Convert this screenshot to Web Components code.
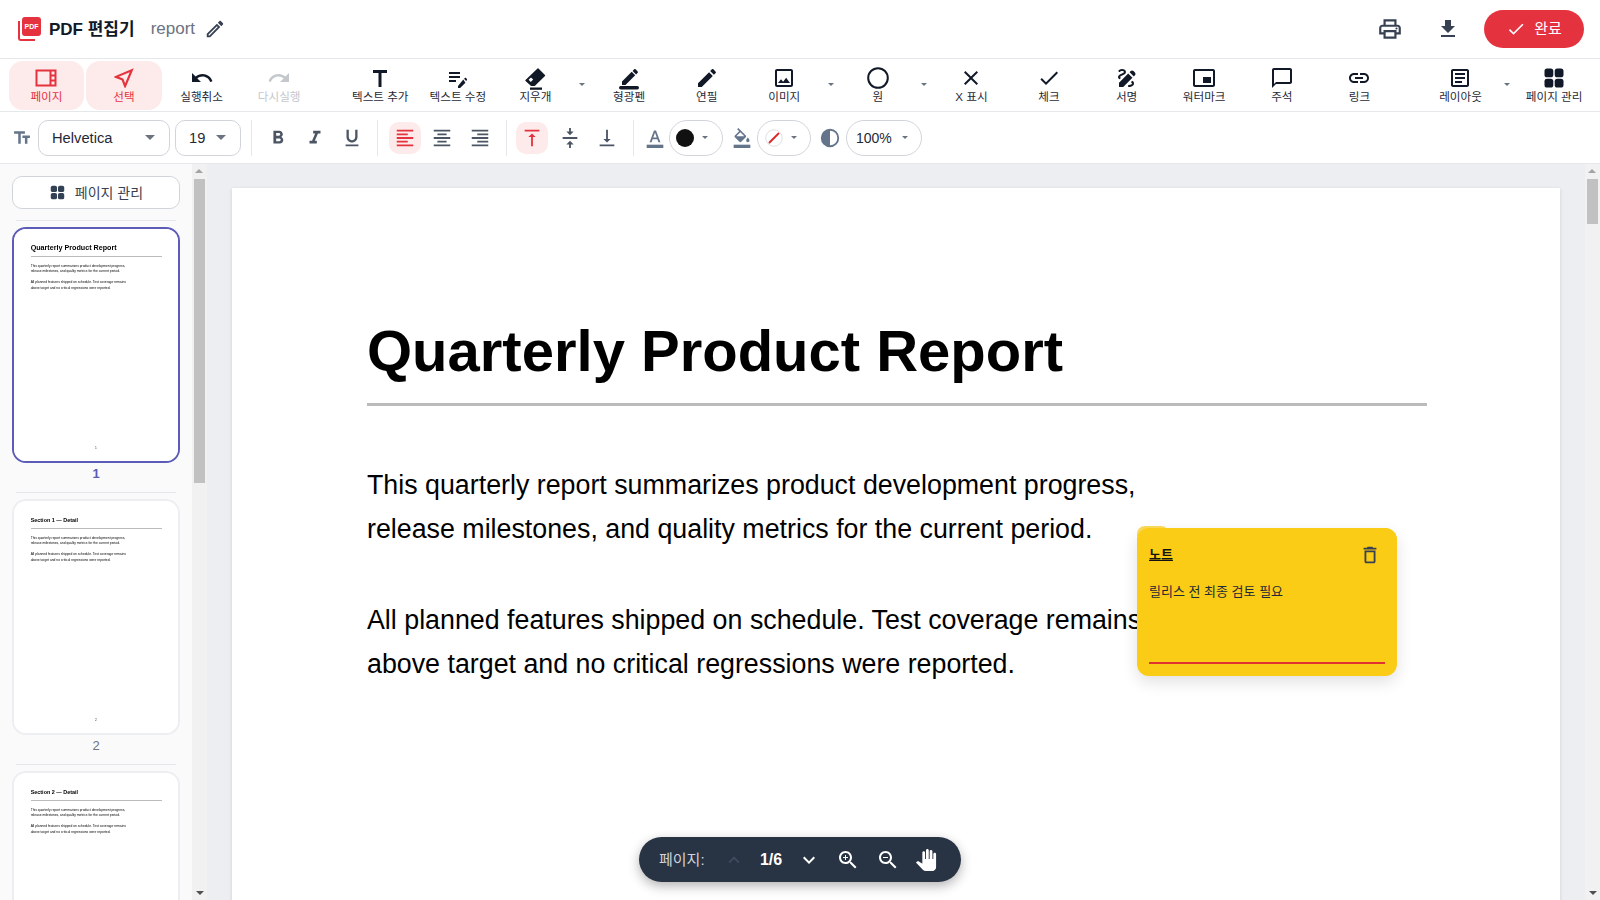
<!DOCTYPE html>
<html lang="ko">
<head>
<meta charset="utf-8">
<title>PDF 편집기</title>
<style>
    html, body { margin: 0; height: 100%; overflow: hidden; }
    body {
        font-family: "Liberation Sans", "Noto Sans CJK KR", sans-serif;
        color: #1f2937;
        background: #fff;
    }
    pdf-editor { height: 900px; }
</style>
</head>
<body>
<pdf-editor></pdf-editor>

<script>
/* Material style icon paths, all on a 24x24 box */
const ICONS = {
    page: '<path fill-rule="evenodd" d="M1.500 3.500h21v17h-21zM3.500 5.500v13h12v-13zM17.500 5.500v3h3v-3zM17.500 10.500v3h3v-3zM17.500 15.500v3h3v-3z"/>',
    select: '<path d="M17.270 6.730l-4.240 10.130-1.320-3.420-.32-.83-.82-.32-3.430-1.330 10.130-4.230M21 3L3 10.530v.98l6.840 2.650L12.480 21h.98L21 3z"/>',
    undo: '<path d="M12.500 8c-2.650 0-5.050.99-6.900 2.600L2 7v9h9l-3.620-3.620c1.390-1.160 3.160-1.880 5.120-1.880 3.540 0 6.550 2.310 7.600 5.500l2.370-.78C21.080 11.030 17.150 8 12.500 8z"/>',
    redo: '<path d="M18.400 10.600C16.550 8.990 14.150 8 11.500 8c-4.650 0-8.580 3.030-9.960 7.220L3.900 16c1.050-3.190 4.050-5.500 7.600-5.500 1.950 0 3.730.72 5.120 1.880L13 16h9V7l-3.600 3.600z"/>',
    title: '<path d="M5 4v3h5.500v14h3V7H19V4z"/>',
    editnote: '<path d="M3 10h11v2H3zm0-2h11V6H3zm0 8h7v-2H3zm15.010-3.130.71-.71c.39-.39 1.020-.39 1.410 0l.71.71c.39.39.39 1.020 0 1.410l-.71.71zm-.71.71L12 19.880V22h2.120l5.300-5.300z"/>',
    eraser: '<path stroke="currentColor" stroke-width="1.400" stroke-linejoin="round" d="M15 3 21.500 9.500 11.500 19.300H8.300L3 14.500z"/><path fill="#fff" d="M5.600 13.800 8 11.400 10.200 13.600 7.800 16z"/><rect x="7" y="21.500" width="12" height="2.300"/>',
    highlight: '<path d="M5 15.500V19h3.500L18.200 9.300l-3.500-3.500zM20.700 6.800c.4-.4.4-1 0-1.400l-2.100-2.100c-.4-.4-1-.4-1.400 0l-1.600 1.600 3.500 3.500z"/><rect x="2" y="20" width="20" height="3.400" rx="1.700"/>',
    pencil: '<path d="M3 17.250V21h3.750L17.810 9.940l-3.750-3.750L3 17.250zM20.710 7.040c.39-.39.39-1.020 0-1.410l-2.340-2.340c-.39-.39-1.020-.39-1.410 0l-1.830 1.830 3.750 3.750 1.830-1.830z"/>',
    pencilline: '<path d="M14.060 9.020l.92.92L5.920 19H5v-.92l9.060-9.060M17.660 3c-.25 0-.51.1-.7.29l-1.830 1.830 3.750 3.750 1.830-1.830c.39-.39.39-1.020 0-1.410l-2.340-2.340c-.2-.2-.45-.29-.71-.29zm-3.600 3.190L3 17.250V21h3.750L17.810 9.940l-3.750-3.750z"/>',
    image: '<path d="M19 5v14H5V5h14m0-2H5c-1.100 0-2 .9-2 2v14c0 1.100.9 2 2 2h14c1.100 0 2-.9 2-2V5c0-1.100-.9-2-2-2zm-4.860 8.860l-3 3.870L9 13.140 6 17h12l-3.860-5.140z"/>',
    circle: '<circle cx="12" cy="12" r="9.800" fill="none" stroke="currentColor" stroke-width="2"/>',
    cross: '<path d="M19 6.410 17.590 5 12 10.590 6.410 5 5 6.410 10.590 12 5 17.590 6.410 19 12 13.410 17.590 19 19 17.590 13.410 12z"/>',
    check: '<path d="M9 16.170 4.830 12l-1.420 1.410L9 19 21 7l-1.410-1.410z"/>',
    sign: '<path d="M18.850 10.390l1.060-1.060c.78-.78.78-2.050 0-2.830L18.500 5.090c-.78-.78-2.050-.78-2.830 0l-1.060 1.060 4.240 4.240zm-5.660-2.830L4 16.760V21h4.240l9.190-9.190-4.240-4.250zM19 17.500c0 2.190-2.540 3.500-5 3.500-.55 0-1-.45-1-1s.45-1 1-1c1.540 0 3-.73 3-1.500 0-.47-.48-.87-1.230-1.200l1.480-1.480c1.070.63 1.750 1.460 1.750 2.680zM4.580 13.350C3.610 12.790 3 12.060 3 11c0-1.800 1.890-2.630 3.560-3.360C7.590 7.180 9 6.560 9 6c0-.41-.78-1-2-1-1.260 0-1.800.61-1.830.64-.35.41-.98.46-1.400.12-.41-.34-.49-.95-.15-1.370C3.730 4.270 4.820 3 7 3s4 1.280 4 3c0 1.870-1.930 2.720-3.640 3.470C6.420 9.880 5 10.500 5 11c0 .31.43.6 1.070.86z"/>',
    watermark: '<path d="M19 11h-8v6h8v-6zm4 8V5c0-1.100-.9-2-2-2H3c-1.100 0-2 .9-2 2v14c0 1.100.9 2 2 2h18c1.100 0 2-.9 2-2zm-2 0H3V5h18v14z"/>',
    comment: '<path d="M20 2H4c-1.100 0-2 .9-2 2v18l4-4h14c1.100 0 2-.9 2-2V4c0-1.100-.9-2-2-2zm0 14H6l-2 2V4h16v12z"/>',
    link: '<path d="M3.900 12c0-1.710 1.390-3.100 3.100-3.100h4V7H7c-2.760 0-5 2.240-5 5s2.240 5 5 5h4v-1.900H7c-1.710 0-3.100-1.390-3.100-3.100zM8 13h8v-2H8v2zm9-6h-4v1.900h4c1.710 0 3.100 1.390 3.100 3.100s-1.390 3.100-3.100 3.100h-4V17h4c2.760 0 5-2.240 5-5s-2.240-5-5-5z"/>',
    layout: '<path d="M19 5v14H5V5h14m0-2H5c-1.100 0-2 .9-2 2v14c0 1.100.9 2 2 2h14c1.100 0 2-.9 2-2V5c0-1.100-.9-2-2-2z"/><path d="M14 17H7v-2h7v2zm3-4H7v-2h10v2zm0-4H7V7h10v2z"/>',
    grid: '<rect x="2.500" y="2.500" width="8.800" height="8.800" rx="2.600"/><rect x="12.700" y="2.500" width="8.800" height="8.800" rx="2.600"/><rect x="2.500" y="12.700" width="8.800" height="8.800" rx="2.600"/><rect x="12.700" y="12.700" width="8.800" height="8.800" rx="2.600"/>',
    print: '<path d="M19 8h-1V3H6v5H5c-1.660 0-3 1.340-3 3v6h4v4h12v-4h4v-6c0-1.660-1.340-3-3-3zM8 5h8v3H8V5zm8 14H8v-4h8v4zm2-4v-2H6v2H4v-4c0-.55.45-1 1-1h14c.55 0 1 .45 1 1v4h-2z"/><circle cx="18" cy="11.500" r="1"/>',
    download: '<path d="M5 20h14v-2H5v2zM19 9h-4V3H9v6H5l7 7 7-7z"/>',
    textsize: '<path d="M2.500 4v3h5v12h3V7h5V4h-13zm19 5h-9v3h3v7h3v-7h3V9z"/>',
    bold: '<path d="M15.600 10.790c.97-.67 1.650-1.770 1.650-2.790 0-2.260-1.750-4-4-4H7v14h7.040c2.090 0 3.710-1.700 3.710-3.790 0-1.520-.86-2.820-2.150-3.420zM10 6.500h3c.83 0 1.500.67 1.500 1.500s-.67 1.500-1.500 1.500h-3v-3zm3.500 9H10v-3h3.500c.83 0 1.500.67 1.500 1.500s-.67 1.500-1.500 1.500z"/>',
    italic: '<path d="M10 4v3h2.210l-3.420 8H6v3h8v-3h-2.210l3.420-8H18V4z"/>',
    underline: '<path d="M12 17c3.310 0 6-2.690 6-6V3h-2.500v8c0 1.930-1.570 3.500-3.500 3.500S8.500 12.930 8.500 11V3H6v8c0 3.310 2.690 6 6 6zm-7 2v2h14v-2H5z"/>',
    alignleft: '<path d="M15 15H3v2h12v-2zm0-8H3v2h12V7zM3 13h18v-2H3v2zm0 8h18v-2H3v2zM3 3v2h18V3H3z"/>',
    aligncenter: '<path d="M7 15v2h10v-2H7zm-4 6h18v-2H3v2zm0-8h18v-2H3v2zm4-6v2h10V7H7zM3 3v2h18V3H3z"/>',
    alignright: '<path d="M3 21h18v-2H3v2zm6-4h12v-2H9v2zm-6-4h18v-2H3v2zm6-4h12V7H9v2zM3 3v2h18V3H3z"/>',
    valigntop: '<path d="M8 11h3v10h2V11h3l-4-4-4 4zM4 3v2h16V3H4z"/>',
    valignmid: '<path d="M8 19h3v4h2v-4h3l-4-4-4 4zm8-14h-3V1h-2v4H8l4 4 4-4zM4 11v2h16v-2H4z"/>',
    valignbot: '<path d="M16 13h-3V3h-2v10H8l4 4 4-4zM4 19v2h16v-2H4z"/>',
    textcolor: '<path d="M2 20h20v4H2z"/><path d="M5.490 17h2.420l1.270-3.580h5.650L16.090 17h2.420L13.250 3h-2.500zm4.420-5.610 2.030-5.790h.12l2.030 5.790z"/>',
    fill: '<path d="M16.560 8.940 7.620 0 6.210 1.410l2.380 2.380-5.150 5.150c-.59.59-.59 1.540 0 2.120l5.500 5.500c.29.29.68.44 1.060.44s.77-.15 1.060-.44l5.500-5.500c.59-.58.59-1.530 0-2.120zM5.210 10 10 5.210 14.790 10zM19 11.500s-2 2.170-2 3.500c0 1.100.9 2 2 2s2-.9 2-2c0-1.330-2-3.500-2-3.500z"/><path d="M2 20h20v4H2z"/>',
    contrast: '<circle cx="12" cy="12" r="9" fill="none" stroke="currentColor" stroke-width="2"/><path d="M12 3a9 9 0 0 0 0 18z"/>',
    zoomin: '<path d="M15.500 14h-.79l-.28-.27C15.410 12.590 16 11.110 16 9.500 16 5.910 13.090 3 9.500 3S3 5.910 3 9.500 5.910 16 9.500 16c1.610 0 3.090-.59 4.230-1.570l.27.28v.79l5 4.990L20.490 19l-4.990-5zm-6 0C7.010 14 5 11.990 5 9.500S7.010 5 9.500 5 14 7.010 14 9.500 11.990 14 9.500 14z"/><path d="M12 10h-2v2H9v-2H7V9h2V7h1v2h2z"/>',
    zoomout: '<path d="M15.500 14h-.79l-.28-.27C15.410 12.590 16 11.110 16 9.500 16 5.910 13.090 3 9.500 3S3 5.910 3 9.500 5.910 16 9.500 16c1.610 0 3.090-.59 4.230-1.570l.27.28v.79l5 4.990L20.490 19l-4.990-5zm-6 0C7.010 14 5 11.990 5 9.500S7.010 5 9.500 5 14 7.010 14 9.500 11.990 14 9.500 14z"/><path d="M7 9h5v1H7z"/>',
    hand: '<path d="M23 5.500V20c0 2.200-1.800 4-4 4h-7.300c-1.080 0-2.100-.43-2.850-1.190L1 14.830s1.260-1.230 1.300-1.250c.22-.19.49-.29.79-.29.22 0 .42.06.6.16.04.01 4.310 2.460 4.310 2.460V4c0-.83.67-1.500 1.500-1.500S11 3.170 11 4v7h1V1.500c0-.83.67-1.500 1.500-1.500S15 .67 15 1.500V11h1V2.500c0-.83.67-1.500 1.500-1.500s1.500.67 1.500 1.500V11h1V5.500c0-.83.67-1.500 1.500-1.500s1.500.67 1.500 1.500z"/>',
    up: '<path d="M7.410 15.410 12 10.830l4.590 4.580L18 14l-6-6-6 6z"/>',
    down: '<path d="M7.410 8.590 12 13.170l4.590-4.580L18 10l-6 6-6-6z"/>',
    trash: '<path d="M6 19c0 1.100.9 2 2 2h8c1.100 0 2-.9 2-2V7H6v12zM8 9h8v10H8V9zm7.500-5-1-1h-5l-1 1H5v2h14V4z"/>',
    slash: '<circle cx="12" cy="12" r="11" fill="#fff" stroke="#d1d5db" stroke-width="1"/><path d="M6 18 18 6" stroke="#dc2626" stroke-width="2.400" stroke-linecap="round"/>'
};

class UiIcon extends HTMLElement {
    connectedCallback() {
        const size = this.getAttribute('size') || 24;
        this.attachShadow({ mode: 'open' }).innerHTML = `
            <style>
                :host { display: inline-flex; width: ${size}px; height: ${size}px; flex: none; }
                svg { width: 100%; height: 100%; fill: currentColor; display: block; }
            </style>
            <svg viewBox="0 0 24 24">${ICONS[this.getAttribute('name')] || ''}</svg>`;
    }
}

class UiCaret extends HTMLElement {
    connectedCallback() {
        this.attachShadow({ mode: 'open' }).innerHTML = `
            <style>
                :host {
                    display: block; flex: none; width: 0; height: 0;
                    border-left: var(--w, 4px) solid transparent;
                    border-right: var(--w, 4px) solid transparent;
                    border-top: var(--w, 4px) solid var(--c, #6b7280);
                }
            </style>`;
    }
}

class AppHeader extends HTMLElement {
    connectedCallback() {
        this.attachShadow({ mode: 'open' }).innerHTML = `
            <style>
                :host {
                    display: flex; align-items: center; height: 59px; padding: 0 16px 0 18px;
                    box-sizing: border-box; border-bottom: 1px solid #e5e7eb; background: #fff;
                }
                .logo { position: relative; width: 23px; height: 24px; margin-right: 8px; flex: none; }
                .back { position: absolute; left: 0; top: 4px; width: 17px; height: 20px;
                    border-left: 2px solid #e5323f; border-bottom: 2px solid #e5323f; box-sizing: border-box; border-radius: 0 0 0 3px; }
                .front { position: absolute; right: 0; top: 0; width: 19px; height: 19px; background: #e5323f; border-radius: 3px;
                    color: #fff; font: bold 7px "Liberation Sans", sans-serif; display: flex; align-items: center; justify-content: center; }
                h1 { margin: 0 0 3px; font-size: 17px; font-weight: 700; color: #111827; }
                .name { font-size: 17px; color: #6b7280; margin-left: 16px; }
                .edit { margin-left: 9px; color: #374151; }
                .spacer { flex: 1; }
                .act { color: #374151; display: flex; }
                .print { margin-right: 33px; }
                .dl { margin-right: 24px; }
                button {
                    width: 100px; height: 38px; border: 0; border-radius: 19px; background: #e5323f; color: #fff;
                    font: 15px "Liberation Sans", "Noto Sans CJK KR", sans-serif;
                    display: flex; align-items: center; justify-content: center; gap: 8px; padding: 0;
                }
                button span { margin-bottom: 3px; }
            </style>
            <div class="logo"><span class="back"></span><span class="front">PDF</span></div>
            <h1>PDF 편집기</h1>
            <span class="name">report</span>
            <ui-icon class="edit" name="pencilline" size="22"></ui-icon>
            <span class="spacer"></span>
            <span class="act print"><ui-icon name="print" size="26"></ui-icon></span>
            <span class="act dl"><ui-icon name="download" size="24"></ui-icon></span>
            <button><ui-icon name="check" size="20"></ui-icon><span>완료</span></button>`;
    }
}

class ToolButton extends HTMLElement {
    connectedCallback() {
        this.attachShadow({ mode: 'open' }).innerHTML = `
            <style>
                :host {
                    display: flex; flex-direction: column; align-items: center; justify-content: flex-start;
                    width: 75.600px; height: 49px; box-sizing: border-box; padding-top: 5px; border-radius: 14px;
                    font-size: 11.600px; line-height: 14px; color: #1f2937; flex: none; white-space: nowrap;
                }
                :host([active]) { background: #fdeaea; color: #e5323f; }
                :host([disabled]) { color: #c4c7cc; }
                .ic { height: 24px; display: flex; align-items: center; justify-content: center; color: #111827; }
                :host([active]) .ic { color: #e5323f; }
                :host([disabled]) .ic { color: #c4c7cc; }
            </style>
            <div class="ic"><ui-icon name="${this.getAttribute('icon')}" size="${this.getAttribute('size') || 24}"></ui-icon></div>
            <slot></slot>`;
    }
}

class MainToolbar extends HTMLElement {
    connectedCallback() {
        const tool = (icon, label, extra = '') => `<tool-button icon="${icon}" ${extra}>${label}</tool-button>`;
        const more = '<span class="more"><ui-caret></ui-caret></span>';
        this.attachShadow({ mode: 'open' }).innerHTML = `
            <style>
                :host {
                    display: flex; align-items: center; height: 53px; padding: 0 8px 0 8.600px; gap: 2px;
                    box-sizing: border-box; border-bottom: 1px solid #e5e7eb; background: #fff;
                    --w: 3px;
                }
                .gap { width: 21.500px; flex: none; }
                .more { width: 14px; flex: none; display: flex; justify-content: center; padding: 0 1px 2px 0; box-sizing: border-box; }
            </style>
            ${tool('page', '페이지', 'active')}
            ${tool('select', '선택', 'active size="26"')}
            ${tool('undo', '실행취소')}
            ${tool('redo', '다시실행', 'disabled')}
            <span class="gap"></span>
            ${tool('title', '텍스트 추가')}
            ${tool('editnote', '텍스트 수정')}
            ${tool('eraser', '지우개')}${more}
            ${tool('highlight', '형광펜')}
            ${tool('pencil', '연필')}
            ${tool('image', '이미지')}${more}
            ${tool('circle', '원')}${more}
            ${tool('cross', 'X 표시')}
            ${tool('check', '체크')}
            ${tool('sign', '서명')}
            ${tool('watermark', '워터마크')}
            ${tool('comment', '주석')}
            ${tool('link', '링크')}
            <span class="gap"></span>
            ${tool('layout', '레이아웃')}${more}
            ${tool('grid', '페이지 관리')}`;
    }
}

class FormatBar extends HTMLElement {
    connectedCallback() {
        const btn = (icon, on) => `<span class="btn ${on ? 'on' : ''}"><ui-icon name="${icon}" size="22"></ui-icon></span>`;
        this.attachShadow({ mode: 'open' }).innerHTML = `
            <style>
                :host {
                    display: flex; align-items: center; height: 52px; padding: 0 0 0 12px;
                    box-sizing: border-box; border-bottom: 1px solid #e5e7eb; background: #fff; color: #64748b;
                    font-size: 14.700px;
                }
                .select {
                    display: flex; align-items: center; justify-content: space-between; height: 36px; box-sizing: border-box;
                    border: 1px solid #d1d5db; border-radius: 10px; color: #1f2937; padding: 0 14px 0 13px;
                }
                .font { width: 132px; margin-left: 6px; }
                .size { width: 66px; margin-left: 5px; }
                .sep { width: 1px; height: 36px; background: #e5e7eb; flex: none; }
                .btn { width: 32px; height: 32px; border-radius: 10px; display: flex; align-items: center; justify-content: center;
                    color: #4b5563; flex: none; }
                .btn.on { background: #fdeaea; color: #e5323f; }
                .pill {
                    display: flex; align-items: center; height: 36px; box-sizing: border-box; border: 1px solid #d1d5db;
                    border-radius: 18px; --w: 3px; color: #1f2937; flex: none;
                }
                .dot { width: 18px; height: 18px; border-radius: 50%; background: #111; }
                .plain { width: 22px; display: flex; justify-content: center; color: #64748b; flex: none; }
            </style>
            <ui-icon name="textsize" size="20"></ui-icon>
            <div class="select font" style="--w:5px">Helvetica<ui-caret></ui-caret></div>
            <div class="select size" style="--w:5px">19<ui-caret></ui-caret></div>
            <span class="sep" style="margin:0 10px"></span>
            ${btn('bold')}<span style="width:5px"></span>${btn('italic')}<span style="width:5px"></span>${btn('underline')}
            <span class="sep" style="margin:0 11px 0 9px"></span>
            ${btn('alignleft', true)}<span style="width:5px"></span>${btn('aligncenter')}<span style="width:6px"></span>${btn('alignright')}
            <span class="sep" style="margin:0 9px 0 10px"></span>
            ${btn('valigntop', true)}<span style="width:6px"></span>${btn('valignmid')}<span style="width:5px"></span>${btn('valignbot')}
            <span class="sep" style="margin:0 10px"></span>
            <span class="plain"><ui-icon name="textcolor" size="20"></ui-icon></span>
            <div class="pill" style="width:54px;margin-left:3px;padding-left:6px;gap:8px"><span class="dot"></span><ui-caret></ui-caret></div>
            <span class="plain" style="margin-left:8px"><ui-icon name="fill" size="20"></ui-icon></span>
            <div class="pill" style="width:54px;margin-left:4px;padding-left:7px;gap:8px"><ui-icon name="slash" size="18"></ui-icon><ui-caret></ui-caret></div>
            <span class="plain" style="margin-left:8px"><ui-icon name="contrast" size="22"></ui-icon></span>
            <div class="pill" style="width:76px;margin-left:5px;padding-left:9px;gap:10px;font-size:14px">100%<ui-caret></ui-caret></div>`;
    }
}

/* the browser hides native scrollbars in the photo, so draw the classic one */
class ScrollRail extends HTMLElement {
    connectedCallback() {
        this.attachShadow({ mode: 'open' }).innerHTML = `
            <style>
                :host { display: flex; flex-direction: column; width: 15px; height: 100%; flex: none; background: #f1f1f1; }
                .arrow { height: 15px; display: flex; align-items: center; justify-content: center; flex: none; --w: 4px; }
                .up { --c: #a3a3a3; transform: rotate(180deg); }
                .down { --c: #505050; }
                .track { flex: 1; min-height: 0; padding: 0 2px; }
                .thumb { background: #c1c1c1; height: ${this.getAttribute('thumb')}px; }
            </style>
            <div class="arrow up"><ui-caret></ui-caret></div>
            <div class="track"><div class="thumb"></div></div>
            <div class="arrow down"><ui-caret></ui-caret></div>`;
    }
}

/* one page of the document; --s scales it down for the thumbnails */
class PageSheet extends HTMLElement {
    connectedCallback() {
        const num = this.getAttribute('num');
        this.attachShadow({ mode: 'open' }).innerHTML = `
            <style>
                :host {
                    display: block; position: relative; box-sizing: border-box; background: #fff;
                    width: calc(var(--s, 1) * 1328px); height: calc(var(--s, 1) * 1878px);
                    padding: calc(var(--s, 1) * 133px) calc(var(--s, 1) * 133px) 0 calc(var(--s, 1) * 135px);
                    color: #000; font-family: "Liberation Sans", Arial, sans-serif; white-space: nowrap;
                }
                h2 {
                    margin: 0; font-weight: 700; font-size: calc(var(--s, 1) * var(--t, 58px)); line-height: calc(var(--s, 1) * 59px);
                    padding-bottom: calc(var(--s, 1) * 23px); border-bottom: calc(var(--s, 1) * 3px) solid #bbb;
                }
                p { margin: calc(var(--s, 1) * 57px) 0 0; font-size: calc(var(--s, 1) * 26.800px); line-height: calc(var(--s, 1) * 44px); }
                p + p { margin-top: calc(var(--s, 1) * 46.700px); }
                .num { position: absolute; left: 0; right: 0; text-align: center; top: calc(var(--s, 1) * 1760px);
                    font-size: calc(var(--s, 1) * 26px); color: #333; }
            </style>
            <h2>${this.getAttribute('heading')}</h2>
            <p>This quarterly report summarizes product development progress,<br>release milestones, and quality metrics for the current period.</p>
            <p>All planned features shipped on schedule. Test coverage remains<br>above target and no critical regressions were reported.</p>
            ${num ? `<div class="num">${num}</div>` : ''}
            <slot></slot>`;
    }
}

class PageThumb extends HTMLElement {
    connectedCallback() {
        const n = this.getAttribute('num');
        const heading = n === '1' ? 'Quarterly Product Report' : `Section ${n - 1} — Detail`;
        // the third card runs past the window, so its number is not on screen
        const visible = n !== '3';
        this.attachShadow({ mode: 'open' }).innerHTML = `
            <style>
                :host { display: block; }
                .card {
                    width: 168px; height: 236px; box-sizing: border-box; border: 2px solid #eceef1; border-radius: 14px;
                    overflow: hidden; background: #fff; --s: .1235; ${n === '1' ? '' : '--t: 44px;'}
                }
                page-sheet { filter: blur(.25px); }
                :host([selected]) .card { border-color: #5b5bb8; }
                .num { text-align: center; font-size: 13px; line-height: 15px; margin-top: 3px; color: #6b7280; }
                :host([selected]) .num { color: #5b5bb8; font-weight: 700; }
                hr { border: 0; height: 1px; background: #e5e7eb; margin: 11px 4px 6px; }
            </style>
            <div class="card"><page-sheet heading="${heading}" ${visible ? `num="${n}"` : ''}></page-sheet></div>
            ${visible ? `<div class="num">${n}</div><hr>` : ''}`;
    }
}

class ThumbSidebar extends HTMLElement {
    connectedCallback() {
        this.attachShadow({ mode: 'open' }).innerHTML = `
            <style>
                :host { display: flex; width: 207px; height: 100%; flex: none; overflow: hidden; background: #fafafa; }
                .inner { padding: 12px; width: 192px; box-sizing: border-box; flex: none; }
                button {
                    width: 168px; height: 33px; box-sizing: border-box; border: 1px solid #d1d5db; border-radius: 10px; background: #fff;
                    color: #374151; font: 14px "Liberation Sans", "Noto Sans CJK KR", sans-serif;
                    display: flex; align-items: center; justify-content: center; gap: 9px; padding: 0 0 2px;
                }
                button ui-icon { color: #334155; margin-top: 2px; }
                hr { border: 0; height: 1px; background: #e5e7eb; margin: 11px 4px 6px; }
            </style>
            <div class="inner">
                <button><ui-icon name="grid" size="17"></ui-icon>페이지 관리</button>
                <hr>
                <page-thumb num="1" selected></page-thumb>
                <page-thumb num="2"></page-thumb>
                <page-thumb num="3"></page-thumb>
            </div>
            <scroll-rail thumb="304"></scroll-rail>`;
    }
}

class StickyNote extends HTMLElement {
    connectedCallback() {
        this.attachShadow({ mode: 'open' }).innerHTML = `
            <style>
                :host {
                    position: absolute; left: 905px; top: 340px; width: 260px; height: 148px; box-sizing: border-box;
                    padding: 0 12px; background: #facc15; border-radius: 12px; color: #1f2937;
                    box-shadow: 0 6px 16px rgba(0,0,0,.12); display: flex; flex-direction: column;
                    font-family: "Liberation Sans", "Noto Sans CJK KR", sans-serif; white-space: normal;
                }
                .tab { position: absolute; left: 0; top: -2px; width: 32px; height: 10px; background: #f7d65a;
                    border-radius: 8px 8px 0 0; }
                .tab + .cover { position: absolute; left: 0; right: 0; top: 0; height: 12px; background: #facc15; border-radius: 12px 12px 0 0; }
                .head { display: flex; align-items: center; justify-content: space-between; height: 54px; padding-right: 4px; position: relative; }
                .head ui-icon { color: #374151; }
                b { font-size: 13px; text-decoration: underline; color: #111; margin-bottom: 3px; }
                .txt { font-size: 13px; line-height: 20px; flex: 1; color: #1f2937; }
                .line { height: 2px; background: #e0332f; margin-bottom: 12px; }
            </style>
            <span class="tab"></span><span class="cover"></span>
            <div class="head"><b>노트</b><ui-icon name="trash" size="22"></ui-icon></div>
            <div class="txt">릴리스 전 최종 검토 필요</div>
            <div class="line"></div>`;
    }
}

class PageViewer extends HTMLElement {
    connectedCallback() {
        this.attachShadow({ mode: 'open' }).innerHTML = `
            <style>
                :host { display: flex; flex: 1; height: 100%; overflow: hidden; background: #eceef1; }
                .inner { flex: 1; min-width: 0; display: flex; flex-direction: column; align-items: center; padding-top: 24px; }
                page-sheet { box-shadow: 0 1px 4px rgba(0,0,0,.12); flex: none; }
            </style>
            <div class="inner">
                <page-sheet heading="Quarterly Product Report"><sticky-note></sticky-note></page-sheet>
            </div>
            <scroll-rail thumb="45"></scroll-rail>`;
    }
}

class PageControls extends HTMLElement {
    connectedCallback() {
        this.attachShadow({ mode: 'open' }).innerHTML = `
            <style>
                :host {
                    position: absolute; left: 639px; top: 837px; width: 322px; height: 45px; box-sizing: border-box;
                    background: #283344; border-radius: 23px; color: #fff; display: flex; align-items: center;
                    padding-left: 20px; box-shadow: 0 4px 12px rgba(0,0,0,.3); font-size: 15px;
                }
                .lbl { color: #d1d5db; width: 64px; margin-bottom: 2px; }
                .off { color: #3f4b5e; margin-right: 7px; display: flex; }
                b { font-size: 16px; width: 38px; text-align: center; margin-right: 7px; }
                .i { display: flex; margin-right: 16px; }
                .i.d { margin-right: 15px; }
                .i.z { margin-right: 15px; }
            </style>
            <span class="lbl">페이지:</span>
            <span class="off"><ui-icon name="up" size="22"></ui-icon></span>
            <b>1/6</b>
            <span class="i d"><ui-icon name="down" size="24"></ui-icon></span>
            <span class="i"><ui-icon name="zoomin" size="24"></ui-icon></span>
            <span class="i z"><ui-icon name="zoomout" size="24"></ui-icon></span>
            <span class="i"><ui-icon name="hand" size="22"></ui-icon></span>`;
    }
}

class PdfEditor extends HTMLElement {
    connectedCallback() {
        this.attachShadow({ mode: 'open' }).innerHTML = `
            <style>
                :host { display: flex; flex-direction: column; position: relative; overflow: hidden; }
                .body { flex: 1; display: flex; min-height: 0; }
            </style>
            <app-header></app-header>
            <main-toolbar></main-toolbar>
            <format-bar></format-bar>
            <div class="body">
                <thumb-sidebar></thumb-sidebar>
                <page-viewer></page-viewer>
            </div>
            <page-controls></page-controls>`;
    }
}

customElements.define('ui-icon', UiIcon);
customElements.define('ui-caret', UiCaret);
customElements.define('app-header', AppHeader);
customElements.define('tool-button', ToolButton);
customElements.define('main-toolbar', MainToolbar);
customElements.define('format-bar', FormatBar);
customElements.define('scroll-rail', ScrollRail);
customElements.define('page-sheet', PageSheet);
customElements.define('page-thumb', PageThumb);
customElements.define('thumb-sidebar', ThumbSidebar);
customElements.define('sticky-note', StickyNote);
customElements.define('page-viewer', PageViewer);
customElements.define('page-controls', PageControls);
customElements.define('pdf-editor', PdfEditor);
</script>
</body>
</html>
